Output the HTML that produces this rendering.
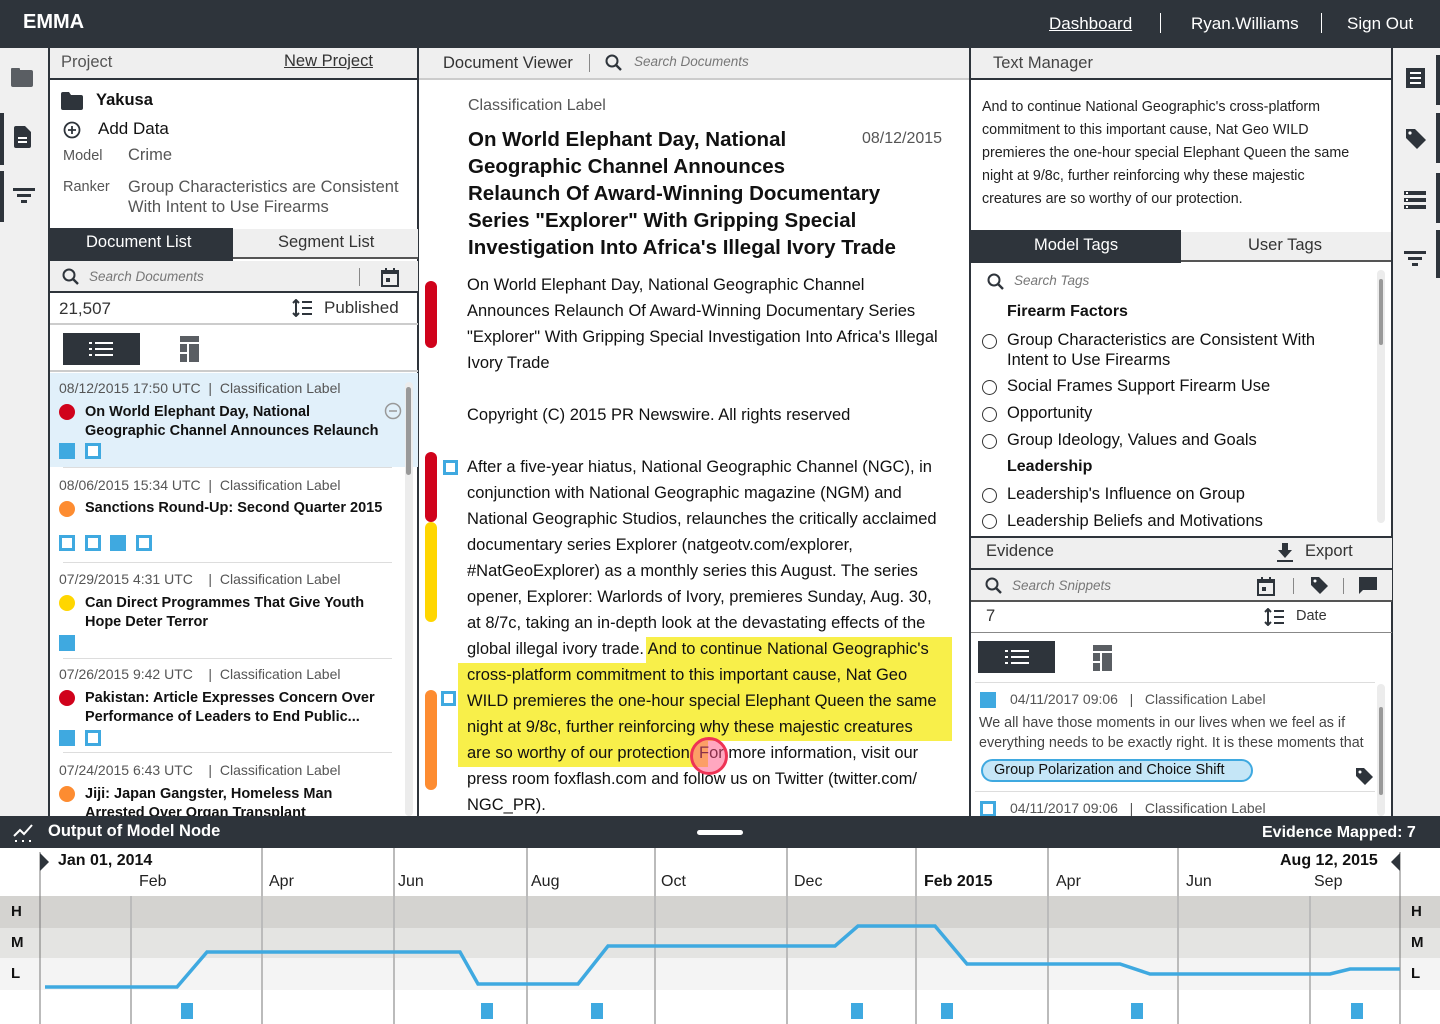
<!DOCTYPE html>
<html><head><meta charset="utf-8"><style>
*{margin:0;padding:0;box-sizing:border-box}
body{width:1440px;height:1024px;position:relative;overflow:hidden;background:#fff;font-family:"Liberation Sans",sans-serif;color:#111}
.a{position:absolute;white-space:nowrap}
.dk{background:#2e343b}
.lt{background:#efefef}
.g{color:#555}
.b{font-weight:bold}
.sq{position:absolute;width:16px;height:16px;background:#3fa9e0}
.sqo{position:absolute;width:16px;height:16px;border:3px solid #3fa9e0;background:#fff}
.dot{position:absolute;width:16px;height:16px;border-radius:50%}
.rad{position:absolute;width:15px;height:15px;border:1.5px solid #333;border-radius:50%}
.doc{font-size:16.5px;line-height:26px;color:#111}
.lab{position:absolute;font-size:16px;color:#222}
</style></head><body>

<!-- header -->
<div class="a dk" style="left:0;top:0;width:1440px;height:48px"></div>
<div class="a b" style="left:23px;top:11px;font-size:20px;color:#fff">EMMA</div>
<div class="a" style="left:1049px;top:14px;font-size:17px;color:#fff;text-decoration:underline">Dashboard</div>
<div class="a" style="left:1160px;top:13px;width:1px;height:20px;background:#fff"></div>
<div class="a" style="left:1191px;top:14px;font-size:17px;color:#fff">Ryan.Williams</div>
<div class="a" style="left:1321px;top:13px;width:1px;height:20px;background:#fff"></div>
<div class="a" style="left:1347px;top:14px;font-size:17px;color:#fff">Sign Out</div>

<!-- left sidebar -->
<div class="a" style="left:0;top:48px;width:48px;height:768px;background:#f0f0f0"></div>
<div class="a" style="left:11px;top:70px;width:22px;height:17px;background:#5a5e63;border-radius:2px"></div>
<div class="a" style="left:11px;top:68px;width:9px;height:4px;background:#5a5e63;border-radius:1px"></div>
<div class="a" style="left:0;top:113px;width:4px;height:52px;background:#2e343b"></div>
<div class="a" style="left:0;top:171px;width:4px;height:51px;background:#2e343b"></div>
<svg class="a" style="left:14px;top:126px" width="18" height="22"><path d="M2 0h9l6 6v14a2 2 0 0 1-2 2H2a2 2 0 0 1-2-2V2a2 2 0 0 1 2-2z" fill="#2e343b"/><rect x="4" y="11" width="9" height="2" fill="#fff"/><rect x="4" y="15" width="9" height="2" fill="#fff"/></svg>
<div class="a" style="left:13px;top:188px;width:22px;height:3px;background:#2e343b"></div>
<div class="a" style="left:17px;top:194px;width:14px;height:3px;background:#2e343b"></div>
<div class="a" style="left:21px;top:200px;width:6px;height:3px;background:#2e343b"></div>

<!-- left panel -->
<div class="a" style="left:48px;top:48px;width:2px;height:768px;background:#2e343b"></div>
<div class="a lt" style="left:50px;top:48px;width:368px;height:31px"></div>
<div class="a" style="left:50px;top:78px;width:368px;height:2px;background:#2e343b"></div>
<div class="a g" style="left:61px;top:53px;font-size:16.5px">Project</div>
<div class="a" style="left:284px;top:52px;font-size:16.5px;color:#333;text-decoration:underline">New Project</div>
<div class="a" style="left:417px;top:48px;width:2px;height:768px;background:#2e343b"></div>
<svg class="a" style="left:61px;top:92px" width="22" height="18"><path d="M0 2a2 2 0 0 1 2-2h6l2 3h10a2 2 0 0 1 2 2v11a2 2 0 0 1-2 2H2a2 2 0 0 1-2-2z" fill="#2e343b"/></svg>
<div class="a b" style="left:96px;top:91px;font-size:16.5px">Yakusa</div>
<svg class="a" style="left:63px;top:121px" width="18" height="18"><circle cx="9" cy="9" r="7.5" fill="none" stroke="#2e343b" stroke-width="1.8"/><path d="M9 5v8M5 9h8" stroke="#2e343b" stroke-width="1.8"/></svg>
<div class="a" style="left:98px;top:119px;font-size:17px">Add Data</div>
<div class="a g" style="left:63px;top:148px;font-size:14.5px">Model</div>
<div class="a g" style="left:128px;top:146px;font-size:16.5px">Crime</div>
<div class="a g" style="left:63px;top:179px;font-size:14.5px">Ranker</div>
<div class="a g" style="left:128px;top:177px;font-size:16.5px;line-height:20px">Group Characteristics are Consistent<br>With Intent to Use Firearms</div>

<div class="a dk" style="left:50px;top:228px;width:183px;height:33px"></div>
<div class="a" style="left:86px;top:233px;font-size:16.5px;color:#fff">Document List</div>
<div class="a lt" style="left:233px;top:229px;width:185px;height:30px;border-bottom:2px solid #555"></div>
<div class="a" style="left:278px;top:233px;font-size:16.5px;color:#333">Segment List</div>
<div class="a lt" style="left:50px;top:261px;width:368px;height:30px"></div>
<div class="a" style="left:50px;top:291px;width:368px;height:2px;background:#2e343b"></div>
<svg class="a" style="left:62px;top:268px" width="18" height="18"><circle cx="7" cy="7" r="5.5" fill="none" stroke="#2e343b" stroke-width="2"/><path d="M11 11l5 5" stroke="#2e343b" stroke-width="2.4"/></svg>
<div class="a" style="left:89px;top:269px;font-size:13.5px;color:#777;font-style:italic">Search Documents</div>
<div class="a" style="left:359px;top:268px;width:1px;height:18px;background:#888"></div>
<svg class="a" style="left:381px;top:268px" width="18" height="19"><rect x="1" y="3" width="16" height="15" fill="none" stroke="#2e343b" stroke-width="2"/><rect x="1" y="3" width="16" height="3" fill="#2e343b"/><rect x="4" y="0" width="2" height="4" fill="#2e343b"/><rect x="12" y="0" width="2" height="4" fill="#2e343b"/><rect x="5" y="10" width="4" height="4" fill="#2e343b"/></svg>
<div class="a" style="left:59px;top:299px;font-size:17px;color:#333">21,507</div>
<svg class="a" style="left:292px;top:299px" width="22" height="18"><path d="M4 1v16M1 4l3-3 3 3M1 14l3 3 3-3" stroke="#2e343b" stroke-width="2" fill="none"/><path d="M10 3h10M10 9h10M10 15h10" stroke="#2e343b" stroke-width="2"/></svg>
<div class="a" style="left:324px;top:298px;font-size:17px;color:#333">Published</div>
<div class="a" style="left:50px;top:323px;width:368px;height:2px;background:#ccc"></div>
<div class="a dk" style="left:63px;top:333px;width:77px;height:32px"></div>
<svg class="a" style="left:89px;top:342px" width="24" height="14"><path d="M0 1h3M6 1h18M0 7h3M6 7h18M0 13h3M6 13h18" stroke="#fff" stroke-width="2"/></svg>
<svg class="a" style="left:180px;top:336px" width="19" height="26"><rect x="0" y="0" width="19" height="6" fill="#5a5e63"/><rect x="0" y="8" width="7" height="8" fill="#5a5e63"/><rect x="9" y="8" width="10" height="18" fill="#5a5e63"/><rect x="0" y="18" width="7" height="8" fill="#5a5e63"/></svg>
<div class="a" style="left:50px;top:370px;width:368px;height:2px;background:#ccc"></div>

<div class="a" style="left:50px;top:373px;width:368px;height:94px;background:#e1f0fa"></div>
<div class="a" style="left:405px;top:382px;width:8px;height:434px;background:#ececec;border-radius:4px"></div>
<div class="a" style="left:406px;top:387px;width:5px;height:88px;background:#999;border-radius:3px"></div>

<div class="a g" style="left:59px;top:380px;font-size:14px">08/12/2015 17:50 UTC &nbsp;|&nbsp; Classification Label</div>
<div class="dot" style="left:59px;top:404px;background:#d0021b"></div>
<div class="a b" style="left:85px;top:403px;font-size:14.5px;line-height:19px">On World Elephant Day, National<br>Geographic Channel Announces Relaunch</div>
<svg class="a" style="left:384px;top:402px" width="18" height="18"><circle cx="9" cy="9" r="7.5" fill="none" stroke="#999" stroke-width="1.5"/><path d="M5 9h8" stroke="#999" stroke-width="1.5"/></svg>
<div class="sq" style="left:59px;top:443px"></div><div class="sqo" style="left:85px;top:443px"></div>
<div class="a" style="left:63px;top:467px;width:329px;height:1px;background:#ddd"></div>

<div class="a g" style="left:59px;top:477px;font-size:14px">08/06/2015 15:34 UTC &nbsp;|&nbsp; Classification Label</div>
<div class="dot" style="left:59px;top:501px;background:#fd8c31"></div>
<div class="a b" style="left:85px;top:500px;font-size:14.5px">Sanctions Round-Up: Second Quarter 2015</div>
<div class="sqo" style="left:59px;top:535px"></div><div class="sqo" style="left:85px;top:535px"></div><div class="sq" style="left:110px;top:535px"></div><div class="sqo" style="left:136px;top:535px"></div>
<div class="a" style="left:63px;top:562px;width:329px;height:1px;background:#ddd"></div>

<div class="a g" style="left:59px;top:571px;font-size:14px">07/29/2015 4:31 UTC &nbsp;&nbsp;&nbsp;|&nbsp; Classification Label</div>
<div class="dot" style="left:59px;top:595px;background:#ffd600"></div>
<div class="a b" style="left:85px;top:594px;font-size:14.5px;line-height:19px">Can Direct Programmes That Give Youth<br>Hope Deter Terror</div>
<div class="sq" style="left:59px;top:635px"></div>
<div class="a" style="left:63px;top:658px;width:329px;height:1px;background:#ddd"></div>

<div class="a g" style="left:59px;top:666px;font-size:14px">07/26/2015 9:42 UTC &nbsp;&nbsp;&nbsp;|&nbsp; Classification Label</div>
<div class="dot" style="left:59px;top:690px;background:#d0021b"></div>
<div class="a b" style="left:85px;top:689px;font-size:14.5px;line-height:19px">Pakistan: Article Expresses Concern Over<br>Performance of Leaders to End Public...</div>
<div class="sq" style="left:59px;top:730px"></div><div class="sqo" style="left:85px;top:730px"></div>
<div class="a" style="left:63px;top:752px;width:329px;height:1px;background:#ddd"></div>

<div class="a g" style="left:59px;top:762px;font-size:14px">07/24/2015 6:43 UTC &nbsp;&nbsp;&nbsp;|&nbsp; Classification Label</div>
<div class="dot" style="left:59px;top:786px;background:#fd8c31"></div>
<div class="a b" style="left:85px;top:785px;font-size:14.5px;line-height:19px">Jiji: Japan Gangster, Homeless Man<br>Arrested Over Organ Transplant</div>

<!-- center -->
<div class="a lt" style="left:419px;top:48px;width:551px;height:31px"></div>
<div class="a" style="left:419px;top:78px;width:551px;height:2px;background:#ccc"></div>
<div class="a" style="left:443px;top:54px;font-size:16.5px;color:#333">Document Viewer</div>
<div class="a" style="left:589px;top:54px;width:1px;height:18px;background:#888"></div>
<svg class="a" style="left:605px;top:54px" width="18" height="18"><circle cx="7" cy="7" r="5.5" fill="none" stroke="#2e343b" stroke-width="2"/><path d="M11 11l5 5" stroke="#2e343b" stroke-width="2.4"/></svg>
<div class="a" style="left:634px;top:54px;font-size:13.5px;color:#777;font-style:italic">Search Documents</div>
<div class="a" style="left:969px;top:48px;width:2px;height:768px;background:#2e343b"></div>

<div class="a g" style="left:468px;top:97px;font-size:16px">Classification Label</div>
<div class="a b" style="left:468px;top:126px;font-size:20.5px;line-height:27px;color:#111">On World Elephant Day, National<br>Geographic Channel Announces<br>Relaunch Of Award-Winning Documentary<br>Series "Explorer" With Gripping Special<br>Investigation Into Africa's Illegal Ivory Trade</div>
<div class="a g" style="left:862px;top:130px;font-size:16px">08/12/2015</div>

<div class="a" style="left:425px;top:281px;width:12px;height:67px;background:#d0021b;border-radius:6px"></div>
<div class="a" style="left:425px;top:452px;width:12px;height:70px;background:#d0021b;border-radius:6px"></div>
<div class="a" style="left:425px;top:522px;width:12px;height:100px;background:#ffd600;border-radius:6px"></div>
<div class="a" style="left:425px;top:690px;width:12px;height:100px;background:#fd8c31;border-radius:6px"></div>
<div class="sqo" style="left:443px;top:460px;width:15px;height:15px"></div>
<div class="sqo" style="left:441px;top:691px;width:15px;height:15px"></div>

<div class="a doc" style="left:467px;top:272px">On World Elephant Day, National Geographic Channel<br>Announces Relaunch Of Award-Winning Documentary Series<br>"Explorer" With Gripping Special Investigation Into Africa's Illegal<br>Ivory Trade</div>
<div class="a doc" style="left:467px;top:402px">Copyright (C) 2015 PR Newswire. All rights reserved</div>
<div class="a" style="left:646px;top:637px;width:306px;height:26px;background:#f8ef4a"></div>
<div class="a" style="left:458px;top:663px;width:494px;height:78px;background:#f8ef4a"></div>
<div class="a" style="left:458px;top:741px;width:250px;height:26px;background:#f8ef4a"></div>
<div class="a doc" style="left:467px;top:454px">After a five-year hiatus, National Geographic Channel (NGC), in<br>conjunction with National Geographic magazine (NGM) and<br>National Geographic Studios, relaunches the critically acclaimed<br>documentary series Explorer (natgeotv.com/explorer,<br>#NatGeoExplorer) as a monthly series this August. The series<br>opener, Explorer: Warlords of Ivory, premieres Sunday, Aug. 30,<br>at 8/7c, taking an in-depth look at the devastating effects of the<br>global illegal ivory trade. And to continue National Geographic's<br>cross-platform commitment to this important cause, Nat Geo<br>WILD premieres the one-hour special Elephant Queen the same<br>night at 9/8c, further reinforcing why these majestic creatures<br>are so worthy of our protection. For more information, visit our<br>press room foxflash.com and follow us on Twitter (twitter.com/<br>NGC_PR).</div>
<div class="a" style="left:690px;top:737px;width:38px;height:38px;border-radius:50%;background:rgba(255,80,130,.5);border:3px solid #ee3355"></div>

<!-- right panel -->
<div class="a lt" style="left:971px;top:48px;width:421px;height:31px"></div>
<div class="a" style="left:971px;top:78px;width:421px;height:2px;background:#2e343b"></div>
<div class="a" style="left:993px;top:54px;font-size:16.5px;color:#444">Text Manager</div>
<div class="a" style="left:1391px;top:48px;width:2px;height:768px;background:#2e343b"></div>
<div class="a" style="left:982px;top:96px;font-size:14.3px;line-height:23px;color:#222">And to continue National Geographic's cross-platform<br>commitment to this important cause, Nat Geo WILD<br>premieres the one-hour special Elephant Queen the same<br>night at 9/8c, further reinforcing why these majestic<br>creatures are so worthy of our protection.</div>
<div class="a dk" style="left:971px;top:230px;width:210px;height:33px"></div>
<div class="a" style="left:1034px;top:236px;font-size:16.5px;color:#fff">Model Tags</div>
<div class="a lt" style="left:1181px;top:232px;width:210px;height:30px;border-bottom:2px solid #555"></div>
<div class="a" style="left:1248px;top:236px;font-size:16.5px;color:#333">User Tags</div>
<div class="a" style="left:1377px;top:270px;width:8px;height:253px;background:#ececec;border-radius:4px"></div>
<div class="a" style="left:1379px;top:279px;width:4px;height:66px;background:#999;border-radius:2px"></div>
<svg class="a" style="left:987px;top:273px" width="18" height="18"><circle cx="7" cy="7" r="5.5" fill="none" stroke="#2e343b" stroke-width="2"/><path d="M11 11l5 5" stroke="#2e343b" stroke-width="2.4"/></svg>
<div class="a" style="left:1014px;top:273px;font-size:13.5px;color:#777;font-style:italic">Search Tags</div>
<div class="a b" style="left:1007px;top:303px;font-size:16px">Firearm Factors</div>
<div class="rad" style="left:982px;top:334px"></div>
<div class="a" style="left:1007px;top:330px;font-size:16.5px;line-height:20px">Group Characteristics are Consistent With<br>Intent to Use Firearms</div>
<div class="rad" style="left:982px;top:380px"></div>
<div class="a" style="left:1007px;top:377px;font-size:16.5px">Social Frames Support Firearm Use</div>
<div class="rad" style="left:982px;top:407px"></div>
<div class="a" style="left:1007px;top:404px;font-size:16.5px">Opportunity</div>
<div class="rad" style="left:982px;top:434px"></div>
<div class="a" style="left:1007px;top:431px;font-size:16.5px">Group Ideology, Values and Goals</div>
<div class="a b" style="left:1007px;top:458px;font-size:16px">Leadership</div>
<div class="rad" style="left:982px;top:488px"></div>
<div class="a" style="left:1007px;top:485px;font-size:16.5px">Leadership's Influence on Group</div>
<div class="rad" style="left:982px;top:514px"></div>
<div class="a" style="left:1007px;top:512px;font-size:16.5px">Leadership Beliefs and Motivations</div>

<div class="a" style="left:971px;top:536px;width:421px;height:2px;background:#2e343b"></div>
<div class="a lt" style="left:971px;top:538px;width:421px;height:30px"></div>
<div class="a" style="left:971px;top:568px;width:421px;height:2px;background:#2e343b"></div>
<div class="a" style="left:986px;top:542px;font-size:16.5px;color:#333">Evidence</div>
<svg class="a" style="left:1276px;top:543px" width="18" height="20"><path d="M6 0h6v7h4l-7 8-7-8h4z" fill="#2e343b"/><rect x="1" y="17" width="16" height="2" fill="#2e343b"/></svg>
<div class="a" style="left:1305px;top:542px;font-size:16.5px;color:#333">Export</div>
<div class="a lt" style="left:971px;top:570px;width:421px;height:30px"></div>
<div class="a" style="left:971px;top:600px;width:421px;height:2px;background:#555"></div>
<svg class="a" style="left:985px;top:577px" width="18" height="18"><circle cx="7" cy="7" r="5.5" fill="none" stroke="#2e343b" stroke-width="2"/><path d="M11 11l5 5" stroke="#2e343b" stroke-width="2.4"/></svg>
<div class="a" style="left:1012px;top:578px;font-size:13.5px;color:#777;font-style:italic">Search Snippets</div>
<svg class="a" style="left:1257px;top:577px" width="18" height="19"><rect x="1" y="3" width="16" height="15" fill="none" stroke="#2e343b" stroke-width="2"/><rect x="1" y="3" width="16" height="3" fill="#2e343b"/><rect x="4" y="0" width="2" height="4" fill="#2e343b"/><rect x="12" y="0" width="2" height="4" fill="#2e343b"/><rect x="5" y="10" width="4" height="4" fill="#2e343b"/></svg>
<div class="a" style="left:1293px;top:578px;width:1px;height:16px;background:#888"></div>
<svg class="a" style="left:1310px;top:576px" width="19" height="19"><path d="M1 1h8l9 9-8 8-9-9z" fill="#2e343b"/><circle cx="5" cy="5" r="1.5" fill="#fff"/></svg>
<div class="a" style="left:1343px;top:578px;width:1px;height:16px;background:#888"></div>
<svg class="a" style="left:1359px;top:577px" width="18" height="17"><path d="M0 0h18v13H4l-4 4z" fill="#2e343b"/></svg>
<div class="a" style="left:986px;top:607px;font-size:16.5px;color:#333">7</div>
<svg class="a" style="left:1264px;top:608px" width="22" height="18"><path d="M4 1v16M1 4l3-3 3 3M1 14l3 3 3-3" stroke="#2e343b" stroke-width="2" fill="none"/><path d="M10 3h10M10 9h10M10 15h10" stroke="#2e343b" stroke-width="2"/></svg>
<div class="a" style="left:1296px;top:608px;font-size:14.5px;color:#333">Date</div>
<div class="a" style="left:971px;top:632px;width:421px;height:1px;background:#888"></div>
<div class="a dk" style="left:978px;top:641px;width:77px;height:32px"></div>
<svg class="a" style="left:1005px;top:650px" width="24" height="14"><path d="M0 1h3M6 1h18M0 7h3M6 7h18M0 13h3M6 13h18" stroke="#fff" stroke-width="2"/></svg>
<svg class="a" style="left:1093px;top:645px" width="19" height="26"><rect x="0" y="0" width="19" height="6" fill="#5a5e63"/><rect x="0" y="8" width="7" height="8" fill="#5a5e63"/><rect x="9" y="8" width="10" height="18" fill="#5a5e63"/><rect x="0" y="18" width="7" height="8" fill="#5a5e63"/></svg>
<div class="a" style="left:975px;top:682px;width:400px;height:1px;background:#ddd"></div>
<div class="a" style="left:1377px;top:684px;width:8px;height:132px;background:#ececec;border-radius:4px"></div>
<div class="a" style="left:1379px;top:707px;width:4px;height:88px;background:#999;border-radius:2px"></div>
<div class="sq" style="left:980px;top:692px"></div>
<div class="a g" style="left:1010px;top:691px;font-size:14px">04/11/2017 09:06 &nbsp;&nbsp;|&nbsp;&nbsp; Classification Label</div>
<div class="a" style="left:979px;top:713px;font-size:14.3px;line-height:20px;color:#444">We all have those moments in our lives when we feel as if<br>everything needs to be exactly right. It is these moments that</div>
<div class="a" style="left:981px;top:759px;width:272px;height:23px;border:2px solid #3fa9e0;border-radius:12px;background:#c5e6f7"></div>
<div class="a" style="left:994px;top:762px;font-size:14.5px;color:#111">Group Polarization and Choice Shift</div>
<svg class="a" style="left:1355px;top:767px" width="19" height="19"><path d="M1 1h8l9 9-8 8-9-9z" fill="#2e343b"/><circle cx="5" cy="5" r="1.5" fill="#fff"/></svg>
<div class="a" style="left:975px;top:791px;width:400px;height:1px;background:#ddd"></div>
<div class="sqo" style="left:980px;top:801px"></div>
<div class="a g" style="left:1010px;top:800px;font-size:14px">04/11/2017 09:06 &nbsp;&nbsp;|&nbsp;&nbsp; Classification Label</div>

<!-- right sidebar -->
<div class="a" style="left:1393px;top:48px;width:47px;height:768px;background:#f0f0f0"></div>
<div class="a" style="left:1436px;top:55px;width:4px;height:50px;background:#2e343b"></div>
<div class="a" style="left:1436px;top:113px;width:4px;height:50px;background:#2e343b"></div>
<div class="a" style="left:1436px;top:173px;width:4px;height:50px;background:#2e343b"></div>
<div class="a" style="left:1436px;top:230px;width:4px;height:48px;background:#2e343b"></div>
<svg class="a" style="left:1406px;top:68px" width="19" height="20"><rect x="0" y="0" width="19" height="20" fill="#2e343b"/><path d="M4 5h11M4 10h11M4 15h11" stroke="#fff" stroke-width="2"/></svg>
<svg class="a" style="left:1405px;top:128px" width="22" height="22"><path d="M1 1h9l11 11-9 9L1 10z" fill="#2e343b"/><circle cx="5" cy="5" r="1.6" fill="#fff"/></svg>
<svg class="a" style="left:1404px;top:191px" width="22" height="18"><rect x="0" y="0" width="22" height="4" fill="#2e343b"/><rect x="0" y="7" width="22" height="4" fill="#2e343b"/><rect x="0" y="14" width="22" height="4" fill="#2e343b"/><rect x="2" y="1" width="2" height="2" fill="#fff"/><rect x="2" y="8" width="2" height="2" fill="#fff"/><rect x="2" y="15" width="2" height="2" fill="#fff"/></svg>
<div class="a" style="left:1404px;top:251px;width:22px;height:3px;background:#2e343b"></div>
<div class="a" style="left:1408px;top:257px;width:14px;height:3px;background:#2e343b"></div>
<div class="a" style="left:1412px;top:263px;width:6px;height:3px;background:#2e343b"></div>

<!-- bottom -->
<div class="a dk" style="left:0;top:816px;width:1440px;height:32px"></div>
<svg class="a" style="left:13px;top:823px" width="22" height="20"><path d="M1 13l6-6 4 4 8-9" stroke="#fff" stroke-width="2" fill="none"/><path d="M2 18h2M9 18h2M16 18h2" stroke="#fff" stroke-width="2"/></svg>
<div class="a b" style="left:48px;top:822px;font-size:16.5px;color:#fff">Output of Model Node</div>
<div class="a" style="left:697px;top:830px;width:46px;height:5px;background:#fff;border-radius:3px"></div>
<div class="a b" style="left:1262px;top:824px;font-size:16px;color:#fff">Evidence Mapped: 7</div>

<div class="a" style="left:0;top:896px;width:1440px;height:32px;background:#d4d3d0"></div>
<div class="a" style="left:0;top:928px;width:1440px;height:30px;background:#e4e4e2"></div>
<div class="a" style="left:0;top:958px;width:1440px;height:32px;background:#f4f4f4"></div>
<svg class="a" style="left:0;top:848px" width="1440" height="176">
<g stroke="#bbb" stroke-width="2">
<line x1="131" y1="48" x2="131" y2="176"/><line x1="262" y1="0" x2="262" y2="176"/><line x1="394" y1="0" x2="394" y2="176"/><line x1="527" y1="0" x2="527" y2="176"/><line x1="655" y1="0" x2="655" y2="176"/><line x1="787" y1="0" x2="787" y2="176"/><line x1="916" y1="0" x2="916" y2="176"/><line x1="1048" y1="0" x2="1048" y2="176"/><line x1="1178" y1="0" x2="1178" y2="176"/><line x1="1310" y1="48" x2="1310" y2="176"/>
</g>
<line x1="40" y1="4" x2="40" y2="176" stroke="#777" stroke-width="1"/>
<line x1="1400" y1="4" x2="1400" y2="176" stroke="#777" stroke-width="1"/>
<path d="M40 5l9 9-9 9z" fill="#2e343b"/>
<path d="M1400 5l-9 9 9 9z" fill="#2e343b"/>
<polyline points="45,139 177,139 207,104 460,104 478,136 578,136 608,98 835,98 858,78 935,78 967,116 1120,116 1150,126 1330,126 1350,121 1400,121" fill="none" stroke="#3fa9e0" stroke-width="3.5"/>
<g fill="#3fa9e0"><rect x="181" y="155" width="12" height="16"/><rect x="481" y="155" width="12" height="16"/><rect x="591" y="155" width="12" height="16"/><rect x="851" y="155" width="12" height="16"/><rect x="941" y="155" width="12" height="16"/><rect x="1131" y="155" width="12" height="16"/><rect x="1351" y="155" width="12" height="16"/></g>
</svg>
<div class="a b" style="left:58px;top:852px;font-size:16px">Jan 01, 2014</div>
<div class="a b" style="left:1280px;top:852px;font-size:16px">Aug 12, 2015</div>
<div class="lab" style="left:139px;top:873px">Feb</div>
<div class="lab" style="left:269px;top:873px">Apr</div>
<div class="lab" style="left:398px;top:873px">Jun</div>
<div class="lab" style="left:531px;top:873px">Aug</div>
<div class="lab" style="left:661px;top:873px">Oct</div>
<div class="lab" style="left:794px;top:873px">Dec</div>
<div class="lab b" style="left:924px;top:873px;color:#111">Feb 2015</div>
<div class="lab" style="left:1056px;top:873px">Apr</div>
<div class="lab" style="left:1186px;top:873px">Jun</div>
<div class="lab" style="left:1314px;top:873px">Sep</div>
<div class="a b" style="left:11px;top:903px;font-size:15px">H</div>
<div class="a b" style="left:11px;top:934px;font-size:15px">M</div>
<div class="a b" style="left:11px;top:965px;font-size:15px">L</div>
<div class="a b" style="left:1411px;top:903px;font-size:15px">H</div>
<div class="a b" style="left:1411px;top:934px;font-size:15px">M</div>
<div class="a b" style="left:1411px;top:965px;font-size:15px">L</div>
</body></html>
